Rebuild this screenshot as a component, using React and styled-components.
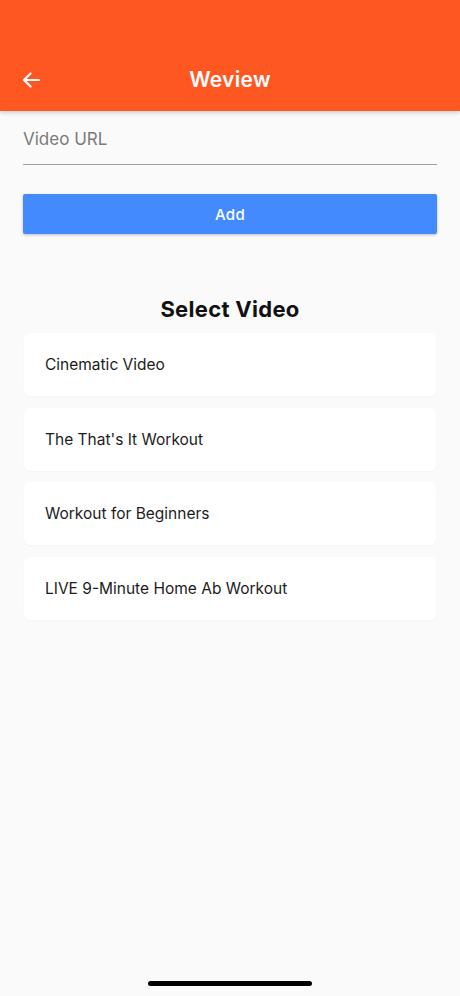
import React, { useState } from 'react';
import styled, { createGlobalStyle } from 'styled-components';

const GlobalStyle = createGlobalStyle`
  html, body {
    margin: 0;
    padding: 0;
    background: #fafafa;
  }
  body {
    font-family: Inter, Roboto, "Noto Sans", "Liberation Sans", sans-serif;
  }
  * { box-sizing: border-box; }
`;

const Screen = styled.div`
  position: relative;
  width: 460px;
  height: 996px;
  background: #fafafa;
  display: flex;
  flex-direction: column;
  overflow: hidden;
`;

const AppBar = styled.header`
  height: 111px;
  background: #ff5722;
  display: flex;
  align-items: flex-end;
  padding: 0 0 16px 22px;
  box-shadow: 0 2px 4px rgba(0, 0, 0, 0.18);
  position: relative;
  z-index: 1;
`;

const BackButton = styled.button`
  width: 20px;
  height: 30px;
  padding: 0;
  border: none;
  background: none;
  display: flex;
  align-items: center;
  cursor: pointer;
`;

const Title = styled.h1`
  flex: 1;
  margin: 0 0 0 -42px;
  text-align: center;
  color: #fff;
  font-size: 21px;
  font-weight: 600;
  line-height: 30px;
  letter-spacing: 0.3px;
`;

const Body = styled.main`
  flex: 1;
  padding: 16px 23px 0;
  display: flex;
  flex-direction: column;
`;

const UrlField = styled.input`
  width: 100%;
  border: none;
  border-bottom: 1px solid #9e9e9e;
  background: transparent;
  font-family: inherit;
  font-size: 17px;
  color: #212121;
  padding: 2px 0 15px;
  outline: none;

  &::placeholder {
    color: #7a7a7a;
  }
`;

const AddButton = styled.button`
  margin-top: 29px;
  height: 40px;
  border: none;
  border-radius: 2px;
  background: #448aff;
  color: #fff;
  font-family: inherit;
  font-size: 15px;
  font-weight: 500;
  letter-spacing: 0.3px;
  box-shadow: 0 1px 3px rgba(0, 0, 0, 0.25);
  cursor: pointer;
`;

const SectionTitle = styled.h2`
  margin: 61px 0 10px;
  text-align: center;
  font-size: 22px;
  font-weight: 700;
  color: #111;
  line-height: 28px;
  letter-spacing: 0.3px;
`;

const VideoList = styled.ul`
  list-style: none;
  margin: 0;
  padding: 0 1px;
  display: flex;
  flex-direction: column;
  gap: 11.7px;
`;

const VideoCard = styled.li`
  height: 63px;
  display: flex;
  align-items: center;
  padding-left: 21px;
  background: #fff;
  border-radius: 6px;
  box-shadow: 0 1px 2px rgba(0, 0, 0, 0.03);
  font-size: 15.5px;
  color: #1c1c1c;
  cursor: pointer;
`;

const HomeIndicator = styled.div`
  position: absolute;
  left: 148px;
  bottom: 10px;
  width: 164px;
  height: 5px;
  border-radius: 3px;
  background: #000;
`;

const videos = [
  'Cinematic Video',
  "The That's It Workout",
  'Workout for Beginners',
  'LIVE 9-Minute Home Ab Workout',
];

function App() {
  const [url, setUrl] = useState('');

  return (
    <>
      <GlobalStyle />
      <Screen>
        <AppBar>
          <BackButton aria-label="Back">
            <svg width="18" height="16" viewBox="0 0 18 16" fill="none">
              <path d="M17 8H2M8.5 1.5L2 8l6.5 6.5" stroke="#fff" strokeWidth="2.2" strokeLinecap="round" strokeLinejoin="round" />
            </svg>
          </BackButton>
          <Title>Weview</Title>
        </AppBar>
        <Body>
          <UrlField
            placeholder="Video URL"
            value={url}
            onChange={e => setUrl(e.target.value)}
          />
          <AddButton>Add</AddButton>
          <SectionTitle>Select Video</SectionTitle>
          <VideoList>
            {videos.map(v => (
              <VideoCard key={v}>{v}</VideoCard>
            ))}
          </VideoList>
        </Body>
        <HomeIndicator />
      </Screen>
    </>
  );
}

export default App;
